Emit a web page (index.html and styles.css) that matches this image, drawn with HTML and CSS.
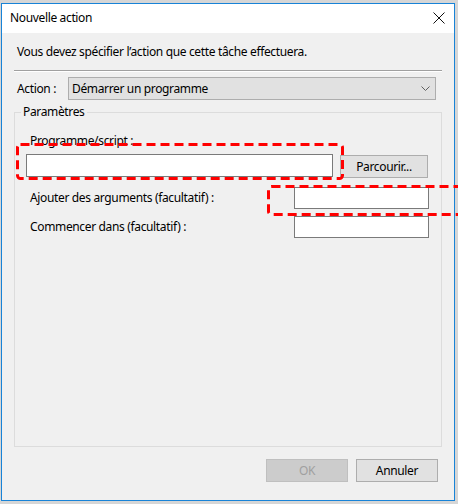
FILE: index.html
```html
<!DOCTYPE html>
<html lang="fr">
<head>
<meta charset="utf-8">
<title>Nouvelle action</title>
<link rel="stylesheet" href="styles.css">
</head>
<body>
<div class="window">
  <div class="titlebar">
    <span class="title">Nouvelle action</span>
    <svg class="close" width="12" height="12" viewBox="0 0 12 12"><path d="M0.5 0.5 L11.5 11.5 M11.5 0.5 L0.5 11.5" stroke="#111" stroke-width="1" fill="none"/></svg>
  </div>
  <div class="content">
    <p class="intro">Vous devez spécifier l’action que cette tâche effectuera.</p>
    <div class="separator"></div>
    <div class="action-row">
      <span class="action-label">Action :</span>
      <div class="select">
        <span>Démarrer un programme</span>
        <svg class="chevron" width="9" height="5" viewBox="0 0 9 5"><path d="M0.5 0.5 L4.5 4.5 L8.5 0.5" stroke="#606060" stroke-width="1" fill="none"/></svg>
      </div>
    </div>
    <fieldset class="group">
      <legend>Paramètres</legend>
      <div class="prog-label">Programme/script :</div>
      <div class="prog-row">
        <div class="input prog-input"></div>
        <div class="button browse">Parcourir...</div>
      </div>
      <div class="args">
        <span class="arg-label">Ajouter des arguments (facultatif) :</span>
        <div class="input arg-input"></div>
        <span class="arg-label">Commencer dans (facultatif) :</span>
        <div class="input arg-input"></div>
      </div>
    </fieldset>
    <div class="buttons">
      <div class="button disabled">OK</div>
      <div class="button">Annuler</div>
    </div>
  </div>
</div>
<svg class="marks" width="458" height="504" viewBox="0 0 458 504">
  <rect x="17.5" y="144.5" width="325" height="34" rx="3" class="dash"/>
  <rect x="268.5" y="186.5" width="220" height="28" rx="3" class="dash"/>
</svg>
</body>
</html>
```
FILE: styles.css
```css
html, body {
  margin: 0;
  padding: 0;
}
body {
  width: 458px;
  height: 504px;
  background: #d6d6d6;
  font-family: "Noto Sans", "DejaVu Sans", sans-serif;
  font-size: 12px;
  letter-spacing: -0.35px;
  color: #000;
  position: relative;
  overflow: hidden;
}
.window {
  position: absolute;
  left: 1px;
  top: 3px;
  width: 452px;
  height: 496px;
  border: 1px solid #1883d7;
  background: #f0f0f0;
  display: flex;
  flex-direction: column;
}
.titlebar {
  height: 29px;
  background: #fff;
  display: flex;
  align-items: center;
  justify-content: space-between;
  flex: none;
}
.title {
  margin-left: 8px;
  line-height: 16px;
  margin-top: -1px;
}
.close {
  margin-right: 9px;
  margin-top: -2px;
}
.content {
  flex: 1;
  display: flex;
  flex-direction: column;
  padding: 11px 0 18px 0;
}
.intro {
  margin: 0 0 0 15px;
  line-height: 16px;
}
.separator {
  margin: 10px 0 0 12px;
  width: 428px;
  border-top: 1px solid #a0a0a0;
  border-bottom: 1px solid #fff;
  height: 0;
}
.action-row {
  display: flex;
  align-items: center;
  margin-top: 5px;
}
.action-label {
  margin-left: 15px;
  width: 51px;
  line-height: 16px;
}
.select {
  width: 366px;
  height: 21px;
  border: 1px solid #adadad;
  background: #e1e1e1;
  display: flex;
  align-items: center;
  justify-content: space-between;
}
.select span {
  margin-left: 3px;
  line-height: 16px;
}
.chevron {
  margin-right: 5px;
}
.group {
  flex: 1;
  margin: 4px 0 12px 12px;
  border: 1px solid #dcdcdc;
  padding: 0;
  min-width: 0;
  box-sizing: border-box;
  width: 428px;
}
.group legend {
  margin-left: 6px;
  padding: 0 2px;
  line-height: 16px;
}
.prog-label {
  margin: 13px 0 0 15px;
  line-height: 16px;
}
.prog-row {
  display: flex;
  align-items: flex-start;
  margin-top: 5px;
  margin-left: 11px;
}
.input {
  background: #fff;
  border: 1px solid #7a7a7a;
  box-sizing: border-box;
}
.prog-input {
  width: 307px;
  height: 23px;
}
.button {
  box-sizing: border-box;
  height: 23px;
  border: 1px solid #adadad;
  background: #e1e1e1;
  display: flex;
  align-items: center;
  justify-content: center;
  line-height: 16px;
}
.browse {
  width: 88px;
  margin-left: 7px;
  margin-top: 1px;
}
.args {
  display: grid;
  grid-template-columns: 264px 135px;
  row-gap: 7px;
  align-items: center;
  margin: 9px 0 0 15px;
}
.arg-label {
  line-height: 16px;
}
.arg-input {
  height: 22px;
}
.buttons {
  display: flex;
  justify-content: flex-end;
  gap: 8px;
  padding-right: 16px;
}
.buttons .button {
  width: 82px;
}
.button.disabled {
  background: #cccccc;
  border-color: #bfbfbf;
  color: #a0a0a0;
}
.marks {
  position: absolute;
  left: 0;
  top: 0;
  pointer-events: none;
}
.dash {
  fill: none;
  stroke: #ff0000;
  stroke-width: 3;
  stroke-dasharray: 9 5;
}
```
